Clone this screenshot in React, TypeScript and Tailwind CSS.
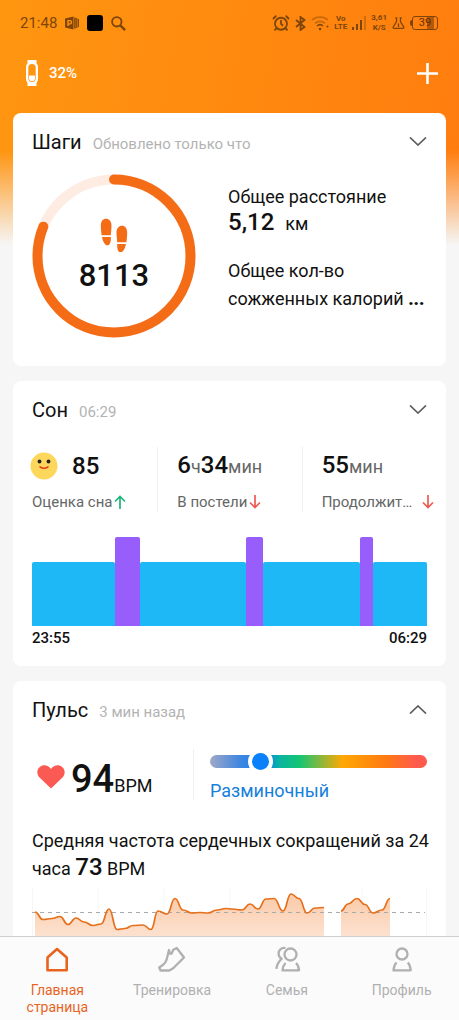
import type { ReactNode } from "react";
import { AlarmClock } from "lucide-react";

const STEPS = { count: 8113, goal: 10000 };

// minutes per sleep phase, 23:55 - 06:29
const SLEEP_PHASES = [
	{ type: "light", minutes: 83 },
	{ type: "rem", minutes: 25 },
	{ type: "light", minutes: 106 },
	{ type: "rem", minutes: 17 },
	{ type: "light", minutes: 97 },
	{ type: "rem", minutes: 13 },
	{ type: "light", minutes: 54 },
];

const PULSE_SERIES: [number, number][][] = [
	[
		[3, 24], [11, 31.5], [20, 30.5], [28, 28.5], [36, 36.5], [44, 30], [52, 34], [61, 37.5],
		[69, 36], [77, 21], [85, 41.5], [93, 40.5], [101, 37.5], [111, 37], [119, 41.5], [126, 23],
		[135, 26], [143, 10.5], [151, 22], [160, 25], [168, 24.5], [176, 25], [185, 22], [194, 20.5],
		[200, 21], [210, 22], [218, 16], [226, 21], [234, 11], [242, 10.5], [251, 23], [259, 6],
		[267, 10.5], [275, 25], [283, 20], [292, 19.5],
	],
	[[309, 23], [316, 16], [325, 10.5], [333, 16.5], [341, 25], [350, 22], [358, 10.5]],
];

function smoothLine(points: [number, number][]) {
	return points
		.map(([x, y], i) => {
			if (i === 0) return `M${x} ${y}`;
			const [px, py] = points[i - 1];
			const mid = (px + x) / 2;
			return `C${mid} ${py} ${mid} ${y} ${x} ${y}`;
		})
		.join(" ");
}

function StatusBar() {
	return (
		<div className="flex h-[46px] items-center justify-between pr-[21px] pl-5 text-[#7d4508]">
			<div className="flex items-center gap-2">
				<span className="text-[15px]">21:48</span>
				<svg className="size-[14px]" viewBox="0 0 14 14" fill="currentColor">
					<path d="M0 2.500 8.500.5v13L0 11.500z" />
					<path d="M9.200 1.500h1.500v11H9.200zM11.200 2h1.200v10h-1.200zM12.900 3h1v8h-1z" />
					<path d="M3 10V4.600h1.800a1.600 1.600 0 0 1 0 3.400H3" fill="none" stroke="#ff8f10" strokeWidth="1.400" />
				</svg>
				<span className="size-4 rounded-[3px] bg-black" />
				<svg className="size-[15px]" viewBox="0 0 15 15" fill="none" stroke="currentColor" strokeWidth="1.800">
					<circle cx="5.800" cy="5.800" r="4.700" />
					<path d="M9.300 9.300l4.800 4.800" strokeWidth="2.400" />
				</svg>
			</div>

			<div className="flex items-center gap-[5px]">
				<AlarmClock className="size-[18px]" strokeWidth={2.4} />
				<svg className="h-[15px] w-[11px]" viewBox="0 0 11 15" fill="none" stroke="currentColor" strokeWidth="1.800">
					<path d="M1 4l8.500 7-4 3V1l4 3L1 11" />
				</svg>
				<svg className="h-4 w-[18px]" viewBox="0 0 18 16" fill="none" stroke="currentColor" strokeWidth="1.600">
					<path d="M1 5a12 12 0 0 1 16 0M4 8.300a7.500 7.500 0 0 1 10 0" opacity=".45" />
					<path d="M6 11a4.500 4.500 0 0 1 6 0" />
					<circle cx="9" cy="14" r="1.300" fill="currentColor" stroke="none" />
					<circle cx="16.500" cy="11.500" r="1" fill="currentColor" stroke="none" />
				</svg>
				<span className="text-center text-[8px] leading-2 font-bold">
					Vo
					<br />
					LTE
				</span>
				<svg className="h-[14px] w-[14px]" viewBox="0 0 14 14" fill="currentColor">
					<path d="M0 11h2v3H0zM4 8h2v6H4zM8 4h2v10H8z" />
					<path d="M12 0h2v14h-2z" opacity=".35" />
				</svg>
				<span className="text-center text-[8px] leading-[10px] font-bold">
					3,61
					<br />
					K/S
				</span>
				<svg className="h-3 w-[13px]" viewBox="0 0 13 12" fill="none" stroke="currentColor" strokeWidth="1.300">
					<path d="M4.500.8v4L1.200 10q-.4 1.300.8 1.300h9q1.200 0 .8-1.300L8.500 4.800v-4M3.300.8h2M7.700.8h2" />
					<path d="M6.500 6.500V10" />
				</svg>
				<div className="flex items-center">
					<span className="h-[6px] w-[2px] rounded-l-sm bg-[#7d4508]" />
					<span className="flex h-[14px] w-[26px] items-center justify-center rounded-[3px] border border-[#7d4508] bg-[linear-gradient(90deg,transparent_60%,#b4580a_60%,#b4580a_88%,transparent_88%)] text-[11px] leading-3 text-[#5e3003]">
						39
					</span>
				</div>
			</div>
		</div>
	);
}

function AppHeader() {
	return (
		<header className="flex h-[54px] items-center justify-between pr-[21px] pl-[26px] text-white">
			<div className="flex items-center gap-[11px]">
				<svg className="h-[26px] w-3" viewBox="0 0 12 26">
					<path
						d="M1.500 0h9v3q1.500 2 1.500 4v12q0 2-1.500 4v3h-9v-3Q0 21 0 19V7q0-2 1.500-4zM6 4a3.700 3.700 0 0 0-3.700 3.700v10.600a3.700 3.700 0 0 0 7.400 0V7.700A3.700 3.700 0 0 0 6 4z"
						fill="currentColor"
						fillRule="evenodd"
					/>
					<path d="M3 15.500h6v2.800a3 3 0 0 1-6 0z" fill="currentColor" />
				</svg>
				<span className="text-[15px] font-medium">32%</span>
			</div>
			<button type="button" aria-label="Добавить устройство">
				<svg className="size-[21px]" viewBox="0 0 21 21" stroke="currentColor" strokeWidth="2.600">
					<path d="M10.500 0v21M0 10.500h21" />
				</svg>
			</button>
		</header>
	);
}

type CardProps = {
	title: string;
	note: string;
	open?: boolean;
	className?: string;
	children: ReactNode;
};

function Card({ title, note, open, className = "", children }: CardProps) {
	return (
		<section className={`rounded-lg bg-white pt-4 ${className}`}>
			<div className="flex h-7 items-start justify-between px-[19px]">
				<div className="flex items-baseline gap-[11px]">
					<h2 className="text-xl leading-[26px]">{title}</h2>
					<span className="text-[15px] leading-[26px] text-[#b3b3b3]">{note}</span>
				</div>
				<button type="button" aria-label={open ? "Свернуть" : "Развернуть"} className="py-2">
					<svg className="h-[9px] w-[18px]" viewBox="0 0 18 9" fill="none" stroke="#5c5c5c" strokeWidth="1.700">
						<path d={open ? "M1 8.500 9 1l8 7.500" : "M1 .5 9 8l8-7.500"} />
					</svg>
				</button>
			</div>
			{children}
		</section>
	);
}

function StepsCard() {
	const length = 2 * Math.PI * 76.5;
	const done = length * (STEPS.count / STEPS.goal);

	return (
		<Card title="Шаги" note="Обновлено только что" className="pb-7">
			<div className="mt-[17px] flex gap-8 px-[19px]">
				<div className="grid size-[164px] shrink-0 place-items-center">
					<svg className="col-start-1 row-start-1 size-full" viewBox="0 0 164 164" fill="none" strokeWidth="10">
						<circle cx="82" cy="82" r="76.500" stroke="#feece3" />
						<circle
							cx="82"
							cy="82"
							r="76.500"
							stroke="#f56c17"
							strokeLinecap="round"
							strokeDasharray={`${done} ${length}`}
							transform="rotate(-90 82 82)"
						/>
					</svg>
					<div className="col-start-1 row-start-1 flex flex-col items-center gap-2 pb-0.5">
						<svg className="h-[34px] w-7" viewBox="0 0 28 34" fill="#f56c17">
							<path d="M.8 8C.8 3 3 .7 6 .7s5.500 2.300 5.500 6.800c0 3.500-.5 6.500-.7 9.800H1.600C1.200 14 .8 11 .8 8zM2 19h8.800c.2 5-.8 8.300-3.300 8.300S3 24 2 19z" />
							<path d="M27.200 15c0-5-2.200-7.300-5.200-7.300s-5.500 2.300-5.500 6.800c0 3.500.5 6.500.7 9.800h9.200c.4-3.300.8-6.300.8-9.300zM26 26h-8.800c-.2 5 .8 8.300 3.300 8.300S25 31 26 26z" />
						</svg>
						<span className="text-[31px] leading-8 font-medium">{STEPS.count}</span>
					</div>
				</div>

				<div className="pt-[10px] text-lg leading-7 whitespace-nowrap">
					<p className="leading-[26px]">Общее расстояние</p>
					<p className="leading-[26px]">
						<span className="mr-[11px] text-2xl leading-none font-medium">5,12</span>
						км
					</p>
					<p className="mt-5">
						Общее кол-во
						<br />
						сожженных калорий <span className="font-black">...</span>
					</p>
				</div>
			</div>
		</Card>
	);
}

function TrendArrow({ up }: { up?: boolean }) {
	return (
		<svg
			className={`h-[14px] w-3 shrink-0 ${up ? "text-[#1fb57c]" : "text-[#ee5a52]"}`}
			viewBox="0 0 12 14"
			fill="none"
			stroke="currentColor"
			strokeWidth="1.700"
		>
			<path d={up ? "M6 14V1.500M1 6.500l5-5 5 5" : "M6 0v12.500M1 7.500l5 5 5-5"} />
		</svg>
	);
}

function SleepCard() {
	return (
		<Card title="Сон" note="06:29" className="pb-[18px]">
			<div className="mt-[22px] grid grid-cols-3">
				<div className="pt-[6px] pl-[19px]">
					<div className="flex h-[26px] items-center gap-[14px]">
						<svg className="-ml-0.5 size-7" viewBox="0 0 28 28">
							<circle cx="14" cy="14" r="13.500" fill="#fdd75c" />
							<circle cx="9.500" cy="9.500" r="1.900" fill="#222" />
							<circle cx="18.500" cy="9.500" r="1.900" fill="#222" />
							<path d="M10 14.800q4 3 8 0" fill="none" stroke="#e23a1c" strokeWidth="1.500" strokeLinecap="round" />
						</svg>
						<span className="text-2xl leading-7 font-medium">85</span>
					</div>
					<p className="mt-[13px] flex items-center gap-0.5 text-[15px] leading-5 text-[#666]">
						Оценка сна <TrendArrow up />
					</p>
				</div>

				<div className="border-l border-[#f0f0f0] pt-[6px] pl-[19px]">
					<p className="text-lg leading-7 text-[#666]">
						<span className="text-2xl leading-none font-medium text-[#111]">6</span>ч
						<span className="text-2xl leading-none font-medium text-[#111]">34</span>мин
					</p>
					<p className="mt-[11px] flex items-center gap-0.5 text-[15px] leading-5 text-[#666]">
						В постели <TrendArrow />
					</p>
				</div>

				<div className="border-l border-[#f0f0f0] pt-[6px] pr-3 pl-[19px]">
					<p className="text-lg leading-7 text-[#666]">
						<span className="text-2xl leading-none font-medium text-[#111]">55</span>мин
					</p>
					<p className="mt-[11px] flex items-center justify-between text-[15px] leading-5 text-[#666]">
						Продолжит… <TrendArrow />
					</p>
				</div>
			</div>

			<div className="px-[19px]">
				<div className="mt-[25px] flex h-[89px] items-end">
					{SLEEP_PHASES.map((phase, i) => (
						<div
							key={i}
							style={{ flexGrow: phase.minutes }}
							className={phase.type === "rem" ? "h-full basis-0 rounded-t-xs bg-[#985efc]" : "h-16 basis-0 rounded-t-xs bg-[#1eb8f7]"}
						/>
					))}
				</div>
				<div className="mt-0.5 flex justify-between text-[15px] leading-5 font-medium">
					<span>23:55</span>
					<span>06:29</span>
				</div>
			</div>
		</Card>
	);
}

function PulseChart() {
	return (
		<svg className="mt-[5px] w-full" viewBox="0 0 395 80" fill="none">
			<defs>
				<linearGradient id="pulse-fill" x1="0" y1="0" x2="0" y2="80" gradientUnits="userSpaceOnUse">
					<stop stopColor="#fac6a2" />
					<stop offset="1" stopColor="#fef4ee" />
				</linearGradient>
			</defs>
			{[0.5, 66, 132, 198, 264, 330, 394.5].map((x) => (
				<path key={x} d={`M${x} 0V80`} stroke="#f6f6f6" />
			))}
			{PULSE_SERIES.map((points, i) => (
				<path
					key={i}
					d={`${smoothLine(points)} V80 H${points[0][0]} Z`}
					fill="url(#pulse-fill)"
				/>
			))}
			<path d="M0 24.500H393" stroke="#aaa" strokeDasharray="4 4" />
			{PULSE_SERIES.map((points, i) => (
				<path key={i} d={smoothLine(points)} stroke="#e56f1b" strokeWidth="1.700" />
			))}
		</svg>
	);
}

function PulseCard() {
	return (
		<Card title="Пульс" note="3 мин назад" open className="pb-4">
			<div className="px-[19px]">
				<div className="mt-6 flex">
					<div className="flex h-[51px] w-[162px] shrink-0 items-start border-r border-[#f0f0f0] pt-[11px] pl-[5px]">
						<svg className="mt-[5px] mr-[6px] h-6 w-7" viewBox="0 0 28 24" fill="#fb5a54">
							<path d="M14 23.500 2.500 12.500C-.8 9 0 4.200 2.800 2 6-.6 11-.2 14 4c3-4.200 8-4.600 11.200-2 2.800 2.200 3.600 7 .3 10.500z" />
						</svg>
						<p className="text-lg leading-10">
							<span className="text-[38px] leading-none font-medium">94</span>BPM
						</p>
					</div>

					<div className="flex grow flex-col pt-[6px] pl-4">
						<input
							id="pulse-zone"
							type="range"
							min={0}
							max={100}
							defaultValue={20}
							className="h-[13px] w-full appearance-none rounded-full bg-[linear-gradient(90deg,#a0a8c8_0%,#3f86e0_14%,#0a84f0_26%,#0ab4a0_32%,#12c574_41%,#ffa805_61%,#ff7a12_81%,#ff5a4e_95%)] [&::-webkit-slider-thumb]:size-[25px] [&::-webkit-slider-thumb]:appearance-none [&::-webkit-slider-thumb]:rounded-full [&::-webkit-slider-thumb]:border-4 [&::-webkit-slider-thumb]:border-white [&::-webkit-slider-thumb]:bg-[#0a80fb]"
						/>
						<label htmlFor="pulse-zone" className="mt-[11px] text-lg leading-6 text-[#1580dc]">
							Разминочный
						</label>
					</div>
				</div>

				<p className="mt-6 text-lg leading-7 whitespace-nowrap">
					Средняя частота сердечных сокращений за 24
					<br />
					часа <span className="text-2xl leading-none font-medium">73</span> BPM
				</p>

				<PulseChart />
			</div>
		</Card>
	);
}

const NAV_ITEMS = [
	{
		label: "Главная страница",
		active: true,
		icon: <path d="M14 3 4.500 11.500v12.800h19.200V11.500z" strokeWidth="2.600" />,
	},
	{
		label: "Тренировка",
		icon: (
			<path d="M11 4l.8 3.500 1.700.2 1.800-4L18.700 2l7.300 9.500-10.800 10.800-3.900 2.200H2.500L1.200 21.500l4-2.800q2.600-2 3.500-5.400z" />
		),
	},
	{
		label: "Семья",
		icon: (
			<>
				<circle cx="17.500" cy="8.500" r="6" />
				<path d="M12.500 17q-2.500 2.500-3 7.300h16.600q-.4-4.800-3.100-7.300" />
				<path d="M12.500 2C8.500 1 5.600 4 5.600 7.500q0 3.500 3 5.300-4.600 4.200-5.200 10" />
			</>
		),
	},
	{
		label: "Профиль",
		icon: (
			<>
				<circle cx="14" cy="8" r="5.500" />
				<path d="M8.500 16.500q-2.500 2.500-3 7.800h17.200q-.5-5.300-2.900-7.800" />
			</>
		),
	},
];

function BottomNav() {
	return (
		<nav className="grid shrink-0 grid-cols-4 border-t border-[#cfcfcf] bg-[#fbfbfb] pt-[9px] pb-1">
			{NAV_ITEMS.map((item) => (
				<a
					key={item.label}
					href="#"
					className={`flex flex-col items-center text-center text-[14px] leading-[17px] ${item.active ? "text-[#e8641e]" : "text-[#b0b0b0]"}`}
				>
					<svg className="mb-2 size-7" viewBox="0 0 28 28" fill="none" stroke="currentColor" strokeWidth="2.300" strokeLinejoin="round">
						{item.icon}
					</svg>
					<span className="w-20">{item.label}</span>
				</a>
			))}
		</nav>
	);
}

export default function App() {
	return (
		<div className="flex h-screen flex-col bg-[#f6f6f6] font-[Roboto,sans-serif] text-[#111]">
			<main className="min-h-0 flex-1 overflow-y-auto bg-[linear-gradient(180deg,transparent_150px,#f6f6f6_245px),linear-gradient(100deg,#ff9610,#ff760e)] [scrollbar-width:none]">
				<StatusBar />
				<AppHeader />
				<div className="flex flex-col gap-[15px] p-[13px]">
					<StepsCard />
					<SleepCard />
					<PulseCard />
				</div>
			</main>
			<BottomNav />
		</div>
	);
}
